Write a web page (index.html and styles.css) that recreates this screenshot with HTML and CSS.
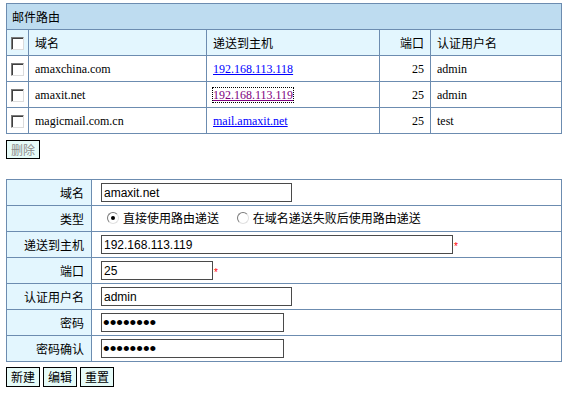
FILE: index.html
```html
<!DOCTYPE html>
<html lang="zh-CN">
<head>
<meta charset="utf-8">
<title>邮件路由</title>
<link rel="stylesheet" href="styles.css">
</head>
<body>
<table class="grid">
  <colgroup><col class="c-check"><col class="c-domain"><col class="c-host"><col class="c-port"><col class="c-user"></colgroup>
  <tr class="title"><td colspan="5">邮件路由</td></tr>
  <tr class="head">
    <td class="chk"><input type="checkbox" class="cb"></td>
    <td>域名</td><td>递送到主机</td><td class="num">端口</td><td>认证用户名</td>
  </tr>
  <tr>
    <td class="chk"><input type="checkbox" class="cb"></td>
    <td>amaxchina.com</td><td><a href="#" class="lnk">192.168.113.118</a></td><td class="num">25</td><td>admin</td>
  </tr>
  <tr>
    <td class="chk"><input type="checkbox" class="cb"></td>
    <td>amaxit.net</td><td><a href="#" class="lnk visited focus">192.168.113.119</a></td><td class="num">25</td><td>admin</td>
  </tr>
  <tr>
    <td class="chk"><input type="checkbox" class="cb"></td>
    <td>magicmail.com.cn</td><td><a href="#" class="lnk">mail.amaxit.net</a></td><td class="num">25</td><td>test</td>
  </tr>
</table>
<div class="actions top-actions"><button class="btn btn-disabled" type="button">删除</button></div>

<table class="form">
  <colgroup><col class="c-label"><col class="c-value"></colgroup>
  <tr><td class="lbl">域名</td><td class="val"><input class="txt w190" type="text" value="amaxit.net"></td></tr>
  <tr><td class="lbl">类型</td><td class="val">
    <label class="opt"><input type="radio" name="t" class="rd" checked>直接使用路由递送</label>
    <label class="opt"><input type="radio" name="t" class="rd">在域名递送失败后使用路由递送</label>
  </td></tr>
  <tr><td class="lbl">递送到主机</td><td class="val"><input class="txt w352" type="text" value="192.168.113.119"><span class="req">*</span></td></tr>
  <tr><td class="lbl">端口</td><td class="val"><input class="txt w112" type="text" value="25"><span class="req">*</span></td></tr>
  <tr><td class="lbl">认证用户名</td><td class="val"><input class="txt w190" type="text" value="admin"></td></tr>
  <tr><td class="lbl">密码</td><td class="val"><input class="txt pwd w182" type="password" value="12345678"></td></tr>
  <tr><td class="lbl">密码确认</td><td class="val"><input class="txt pwd w182" type="password" value="12345678"></td></tr>
</table>
<div class="actions bottom-actions">
  <button class="btn" type="button">新建</button>
  <button class="btn" type="button">编辑</button>
  <button class="btn" type="button">重置</button>
</div>
</body>
</html>
```
FILE: styles.css
```css
body {
  margin: 0;
  padding: 3px 6px;
  background: #fff;
  color: #000;
  font: 12px "Liberation Serif", "Noto Sans CJK SC", serif;
}

.grid, .form {
  border-collapse: collapse;
  table-layout: fixed;
  width: 555px;
}
.grid td, .form td {
  border: 1px solid #6c8cb0;
  height: 25px;
  padding: 0 6px;
  line-height: 14px;
  white-space: nowrap;
}
.c-check { width: 22px; }
.c-domain { width: 178px; }
.c-host { width: 173px; }
.c-port { width: 51px; }
.c-user { width: 131px; }

.title td {
  background: #bedcf0;
  padding-left: 5px;
  font-family: "Noto Sans CJK SC", sans-serif;
}
.head td {
  background: #e3f6fe;
  font-family: "Noto Sans CJK SC", sans-serif;
}
.grid td.chk { padding: 0; text-align: center; }
.grid td.num { text-align: right; }

.cb {
  -webkit-appearance: none;
  appearance: none;
  width: 13px;
  height: 13px;
  margin: 0;
  vertical-align: middle;
  background: #fff;
  border: 1px solid;
  border-color: #7a7a7a #dcdcdc #dcdcdc #7a7a7a;
  box-shadow: inset 1px 1px 0 #404040;
}

.lnk { color: #0000ff; text-decoration: underline; }
.lnk.visited { color: #800080; }
.lnk.focus { outline: 1px dotted #000; outline-offset: 0; }

.actions { display: flex; gap: 3px; }
.top-actions { margin: 6px 0 20px; }
.bottom-actions { margin-top: 5px; }

.btn {
  height: 20px;
  width: 34px;
  padding: 0;
  margin: 0;
  border: 1px solid #000;
  background: #e6fbf8;
  color: #000;
  font: 12px "Noto Sans CJK SC", sans-serif;
  line-height: 16px;
}
.btn-disabled { color: #8c8c8c; height: 19px; }

.c-label { width: 85px; }
.c-value { width: 470px; }
.form td.lbl {
  background: #e3f6fe;
  text-align: right;
  padding: 0 7px 0 0;
  font-family: "Noto Sans CJK SC", sans-serif;
}
.form td.val { padding: 0 0 0 9px; font-family: "Noto Sans CJK SC", sans-serif; }

.txt {
  box-sizing: border-box;
  height: 19px;
  margin: 0;
  padding: 0 2px;
  border: 1px solid #4a4a4a;
  font: 12px "Liberation Sans", sans-serif;
  color: #000;
  vertical-align: middle;
  outline: none;
}
.pwd {
  font-size: 19px;
  line-height: 17px;
  padding: 0 1px;
}
.w190 { width: 191px; }
.w352 { width: 352px; }
.w112 { width: 112px; }
.w182 { width: 183px; }

.req {
  color: #f00;
  font: 10px "Liberation Sans", sans-serif;
  margin-left: 1px;
  vertical-align: -2px;
}

.opt { display: inline-flex; align-items: center; margin-right: 9px; }
.rd {
  -webkit-appearance: none;
  appearance: none;
  width: 12px;
  height: 12px;
  margin: 0 4px 0 6px;
  border-radius: 50%;
  border: 1px solid;
  border-color: #7a7a7a #e0e0e0 #e0e0e0 #7a7a7a;
  background: #fff;
  position: relative;
}
.rd:checked::after {
  content: "";
  position: absolute;
  left: 3px;
  top: 3px;
  width: 4px;
  height: 4px;
  border-radius: 50%;
  background: #000;
}
```
